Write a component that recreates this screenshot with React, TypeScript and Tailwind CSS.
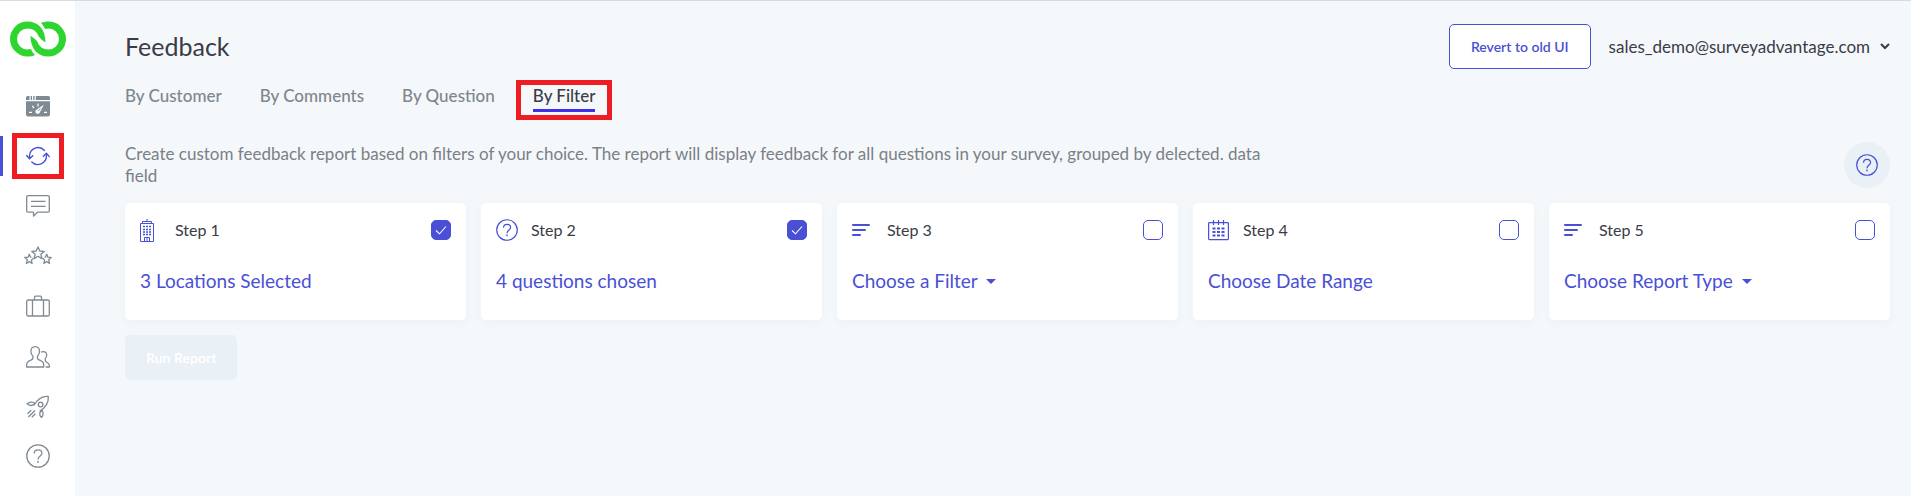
import React, { useState } from 'react';

interface IconProps {
  className?: string;
}

const LogoIcon: React.FC<IconProps> = ({ className }) => (
  <svg viewBox="0 0 56 35" className={className} fill="#2fd52f">
    <path d="M25 33.500C22.800 34.500 20.300 35 17.500 35A17.500 17.500 0 0 1 17.500 0C28 0 35.500 7.500 35.500 20.800C32.500 19 30 17 28.500 14.500C27 10 23 7 17.500 7A10.500 10.500 0 0 0 17.500 28C18.800 28 20 27.800 21 27.500C22 30 23.500 32 25 33.500Z" />
    <path d="M31 1.500C33.200 0.500 35.700 0 38.500 0A17.500 17.500 0 0 1 38.500 35C28 35 20.500 27.500 20.500 14.200C23.500 16 26 18 27.500 20.500C29 25 33 28 38.500 28A10.500 10.500 0 0 0 38.500 7C37.200 7 36 7.200 35 7.500C34 5 32.500 3 31 1.500Z" />
  </svg>
);

const DashboardIcon: React.FC<IconProps> = ({ className }) => (
  <svg viewBox="0 0 24 24" className={className} fill="none">
    <path d="M0 3.500A1.500 1.500 0 0 1 1.500 2H3.500V6H0ZM4.700 2H6V6H4.700ZM7.200 2H8.600V6H7.200ZM9.800 2H22.500A1.500 1.500 0 0 1 24 3.500V6H9.800Z" fill="currentColor" />
    <path d="M0 7.200H24V20.500A2 2 0 0 1 22 22.500H2A2 2 0 0 1 0 20.500Z" fill="currentColor" />
    <path d="M12 9.500V12.500M6.300 12L8 14M3 18.300H6M18 18.300H21" stroke="#fff" strokeWidth="1.200" />
    <path d="M17.800 10.800L14 18A2.300 2.300 0 1 1 10.500 15.700Z" fill="#fff" />
    <path d="M12.200 17.300L14.500 14.400" stroke="currentColor" strokeWidth="0.900" />
  </svg>
);

const RefreshIcon: React.FC<IconProps> = ({ className }) => (
  <svg viewBox="0 0 24 24" className={className} fill="none" stroke="currentColor" strokeWidth="1.400" strokeLinecap="round" strokeLinejoin="round">
    <path d="M3.600 14.200V12A8.500 8.500 0 0 1 18.500 6.500M20.400 10V12A8.500 8.500 0 0 1 5.800 17.900" />
    <path d="M0.700 11.500L3.500 14.800L6.800 11.800M17.300 12.200L20.400 9.300L23.300 12.600" />
  </svg>
);

const CommentIcon: React.FC<IconProps> = ({ className }) => (
  <svg viewBox="0 0 24 24" className={className} fill="none" stroke="currentColor" strokeWidth="1.300" strokeLinejoin="round">
    <path d="M2 1.700H22A1.200 1.200 0 0 1 23.300 2.900V17A1.200 1.200 0 0 1 22 18.200H11.500L7.500 22V18.200H2A1.200 1.200 0 0 1 0.700 17V2.900A1.200 1.200 0 0 1 2 1.700Z" />
    <path d="M5 7.300H19.500M5 12.300H19.500" />
  </svg>
);

const StarsIcon: React.FC<IconProps> = ({ className }) => (
  <svg viewBox="0 0 28 24" className={className} fill="none" stroke="currentColor" strokeWidth="1.300" strokeLinejoin="round">
    <path d="M14 3L15.800 7L20.200 7.400L16.900 10.300L17.900 14.600L14 12.300L10.100 14.600L11.100 10.300L7.800 7.400L12.200 7Z" />
    <path d="M7.500 13.300L6.500 13L5.300 10.200L4.100 13.200L0.800 13.500L3.300 15.700L2.500 19.500L5.300 17.500L8.100 19.500L7.400 15.900L9.500 14.300" />
    <path d="M20.500 13.300L21.500 13L22.700 10.200L23.900 13.200L27.200 13.500L24.700 15.700L25.500 19.500L22.700 17.500L19.900 19.500L20.600 15.900L18.500 14.300" />
  </svg>
);

const SuitcaseIcon: React.FC<IconProps> = ({ className }) => (
  <svg viewBox="0 0 24 24" className={className} fill="none" stroke="currentColor" strokeWidth="1.300">
    <rect x="0.700" y="6" width="22.600" height="16" rx="1.600" />
    <path d="M6.500 6V22M17.500 6V22M8.500 6V3.200A1 1 0 0 1 9.500 2.200H14.500A1 1 0 0 1 15.500 3.200V6" />
  </svg>
);

const UsersIcon: React.FC<IconProps> = ({ className }) => (
  <svg viewBox="0 0 24 24" className={className} fill="none" stroke="currentColor" strokeWidth="1.300" strokeLinejoin="round">
    <path d="M9.200 2.600C6.400 2.600 4.800 4.500 4.900 7.500C5 9.600 5.700 11 6.900 12.200V14.700C6.700 16.300 0.700 16.500 0.700 20.500V23H17.700V20.500C17.700 16.500 11.700 16.300 11.500 14.700V12.200C12.700 11 13.400 9.600 13.500 7.500C13.600 4.500 12 2.600 9.200 2.600Z" />
    <path d="M15 8.300C15.700 7.800 16.500 7.600 17.300 7.600C19.600 7.600 20.800 9 20.700 11.300C20.600 13 20 14 19.200 14.900V16.600C19.300 18.400 23.300 18.200 23.300 21.600V23H19.600" />
  </svg>
);

const RocketIcon: React.FC<IconProps> = ({ className }) => (
  <svg viewBox="0 0 24 24" className={className} fill="none" stroke="currentColor" strokeWidth="1.300" strokeLinejoin="round">
    <path d="M8 11.300C11.500 5.200 16 2 22.300 2.500C22.800 9 19.600 13.600 13.700 17.200" />
    <circle cx="14.600" cy="10.500" r="2.300" />
    <path d="M1 9.700C3.500 7.500 7 7.600 9 9.400C7 12 4 12 1 9.700ZM15.800 16C17.500 18.500 17.400 21.300 15.400 23.500C13 21.200 13.200 18.500 15.800 16Z" />
    <path d="M1.500 19.800L5.200 16.200M2.300 23L9 16.500M5.800 23.200L9.300 19.700" />
  </svg>
);

const HelpIcon: React.FC<IconProps> = ({ className }) => (
  <svg viewBox="0 0 24 24" className={className} fill="none" stroke="currentColor" strokeWidth="1.300">
    <circle cx="12" cy="12" r="11.200" />
    <path d="M8.200 9.500C8.200 7.200 9.800 5.800 12 5.800S15.900 7.200 15.900 9.300C15.900 12 12 12 12 15.500" />
    <path d="M12 17V18.700" strokeWidth="1.500" />
  </svg>
);

const BuildingIcon: React.FC<IconProps> = ({ className }) => (
  <svg viewBox="0 0 14 23" className={className} fill="none" stroke="currentColor">
    <path d="M0.500 22.500V4.500H13.500V22.500ZM2.500 4.500V2.500H11.500V4.500M7 0V2.500M4.500 22.500V18.500H9.500V22.500M7 18.500V22.500" />
    <path d="M3 7.500H11M3 10.500H11M3 13H11M3 15.500H11" strokeWidth="1.400" strokeDasharray="2 1" />
  </svg>
);

const LinesIcon: React.FC<IconProps> = ({ className }) => (
  <svg viewBox="0 0 18 12" className={className} fill="none" stroke="currentColor" strokeWidth="2" strokeLinecap="round">
    <path d="M1 1H17M1 6H13M1 11H8" />
  </svg>
);

const CalendarIcon: React.FC<IconProps> = ({ className }) => (
  <svg viewBox="0 0 21 21" className={className} fill="none" stroke="currentColor" strokeWidth="1.200">
    <rect x="0.600" y="2.600" width="19.800" height="17" rx="0.800" />
    <path d="M5.500 0V5M10.500 0V5M15.500 0V5" />
    <path d="M4.500 8.500H16.500M4.500 12H16.500M4.500 15.500H16.500" strokeWidth="1.800" strokeDasharray="3 1.500" />
  </svg>
);

const navItems = [
  { label: 'Dashboard', icon: DashboardIcon },
  { label: 'Feedback', icon: RefreshIcon, active: true },
  { label: 'Comments', icon: CommentIcon },
  { label: 'Ratings', icon: StarsIcon },
  { label: 'Business', icon: SuitcaseIcon },
  { label: 'Users', icon: UsersIcon },
  { label: 'Launch', icon: RocketIcon },
  { label: 'Help', icon: HelpIcon },
];

const tabs = ['By Customer', 'By Comments', 'By Question', 'By Filter'];

const steps = [
  { name: 'Step 1', value: '3 Locations Selected', icon: BuildingIcon, iconClass: 'w-[14px] h-[23px]', done: true },
  { name: 'Step 2', value: '4 questions chosen', icon: HelpIcon, iconClass: 'w-[22px] h-[22px]', done: true },
  { name: 'Step 3', value: 'Choose a Filter', icon: LinesIcon, iconClass: 'w-[18px] h-3', done: false, dropdown: true },
  { name: 'Step 4', value: 'Choose Date Range', icon: CalendarIcon, iconClass: 'w-[21px] h-[21px]', done: false },
  { name: 'Step 5', value: 'Choose Report Type', icon: LinesIcon, iconClass: 'w-[18px] h-3', done: false, dropdown: true },
];

const Sidebar: React.FC = () => (
  <aside className="w-[75px] shrink-0 bg-white">
    <a href="#" aria-label="Home" className="flex justify-center pt-5 pb-6">
      <LogoIcon className="w-14 h-9" />
    </a>
    <nav>
      {navItems.map(({ label, icon: Icon, active }) => (
        <a
          key={label}
          href="#"
          aria-label={label}
          className={`relative flex h-[50px] items-center justify-center ${active ? 'text-[#4950d6]' : 'text-[#7f8a93]'}`}
        >
          {active && <span className="absolute left-0 top-[5px] h-10 w-[3px] bg-[#4950d6]" />}
          <span className={active ? 'flex h-[46px] w-[52px] items-center justify-center border-5 border-[#ee1c23]' : 'flex'}>
            <Icon className={label === 'Ratings' ? 'w-7 h-6' : 'w-6 h-6'} />
          </span>
        </a>
      ))}
    </nav>
  </aside>
);

interface StepCardProps {
  step: (typeof steps)[number];
}

const StepCard: React.FC<StepCardProps> = ({ step }) => {
  const [done, setDone] = useState(step.done);
  const Icon = step.icon;

  return (
    <div className="rounded-[5px] bg-white px-[15px] pt-[17px] pb-[25px] shadow-[0_2px_10px_rgba(60,90,130,0.05)]">
      <label className="flex h-5 items-center text-[#3a3b47]">
        <span className="flex w-[35px] items-center text-[#4950d6]">
          <Icon className={step.iconClass} />
        </span>
        <span className="text-base">{step.name}</span>
        <span className="relative ml-auto h-5 w-5">
          <input
            type="checkbox"
            checked={done}
            onChange={() => setDone(!done)}
            className="block h-5 w-5 appearance-none rounded-[5px] border border-[#4950d6] bg-white checked:bg-[#4950d6]"
          />
          {done && (
            <svg viewBox="0 0 20 20" className="pointer-events-none absolute inset-0 h-5 w-5" fill="none" stroke="#fff" strokeWidth="1.100">
              <path d="M5 10.500L8.500 13.800L15 6.500" />
            </svg>
          )}
        </span>
      </label>
      <div className="mt-[27px] flex items-center text-[19px] leading-7 text-[#4950d6]">
        {step.dropdown ? (
          <>
            <select aria-label={step.name} className="appearance-none bg-transparent">
              <option>{step.value}</option>
            </select>
            <svg viewBox="0 0 10 5" className="ml-2 h-[5px] w-[10px]" fill="currentColor">
              <path d="M0 0H10L5 5Z" />
            </svg>
          </>
        ) : (
          <button type="button">{step.value}</button>
        )}
      </div>
    </div>
  );
};

const App: React.FC = () => {
  const [activeTab, setActiveTab] = useState('By Filter');

  return (
    <div className="flex min-h-screen border-t border-[#d6dbe0] bg-[#f4f8fb] font-['Lato',sans-serif]">
      <Sidebar />
      <main className="min-w-0 flex-1 pt-[23px] pr-[21px] pl-[50px]">
        <header className="flex h-[45px] items-center justify-between">
          <h1 className="text-[25px] text-[#3a3b47]">Feedback</h1>
          <div className="flex items-center gap-[18px]">
            <button type="button" className="h-[45px] rounded-[5px] border border-[#4950d6] bg-white px-[21px] text-[14px] font-semibold text-[#4950d6]">
              Revert to old UI
            </button>
            <button type="button" className="flex items-center gap-[10px] text-[17px] text-[#3a3b47]">
              sales_demo@surveyadvantage.com
              <svg viewBox="0 0 10 7" className="h-[7px] w-[10px]" fill="none" stroke="currentColor" strokeWidth="2">
                <path d="M1 1L5 5L9 1" />
              </svg>
            </button>
          </div>
        </header>

        <nav className="mt-[11px] flex h-10 gap-[38px] pt-1">
          {tabs.map((tab) => (
            <button
              key={tab}
              type="button"
              onClick={() => setActiveTab(tab)}
              className={`relative h-7 border-b-3 pb-px text-[17px] leading-6 font-medium ${
                tab === activeTab ? 'border-[#402fe4] text-[#3a3b47]' : 'border-transparent text-[#7f868c]'
              }`}
            >
              {tab}
              {tab === activeTab && <span className="absolute -inset-x-[17px] -top-1 h-10 border-5 border-[#ee1c23]" />}
            </button>
          ))}
        </nav>

        <div className="mt-[22px] flex items-center justify-between">
          <p className="max-w-[1150px] text-[17px] leading-[22px] text-[#7b8086]">
            Create custom feedback report based on filters of your choice. The report will display feedback for all
            questions in your survey, grouped by delected. data field
          </p>
          <button type="button" aria-label="Help" className="flex h-[46px] w-[46px] items-center justify-center rounded-full bg-[#e9f0f6] text-[#4950d6]">
            <HelpIcon className="w-[22px] h-[22px]" />
          </button>
        </div>

        <div className="mt-[15px] grid grid-cols-5 gap-[15px]">
          {steps.map((step) => (
            <StepCard key={step.name} step={step} />
          ))}
        </div>

        <button type="button" disabled className="mt-[15px] h-[45px] rounded-[5px] bg-[#e9f0f6] px-[21px] text-[14px] font-bold text-white">
          Run Report
        </button>
      </main>
    </div>
  );
};

export default App;
